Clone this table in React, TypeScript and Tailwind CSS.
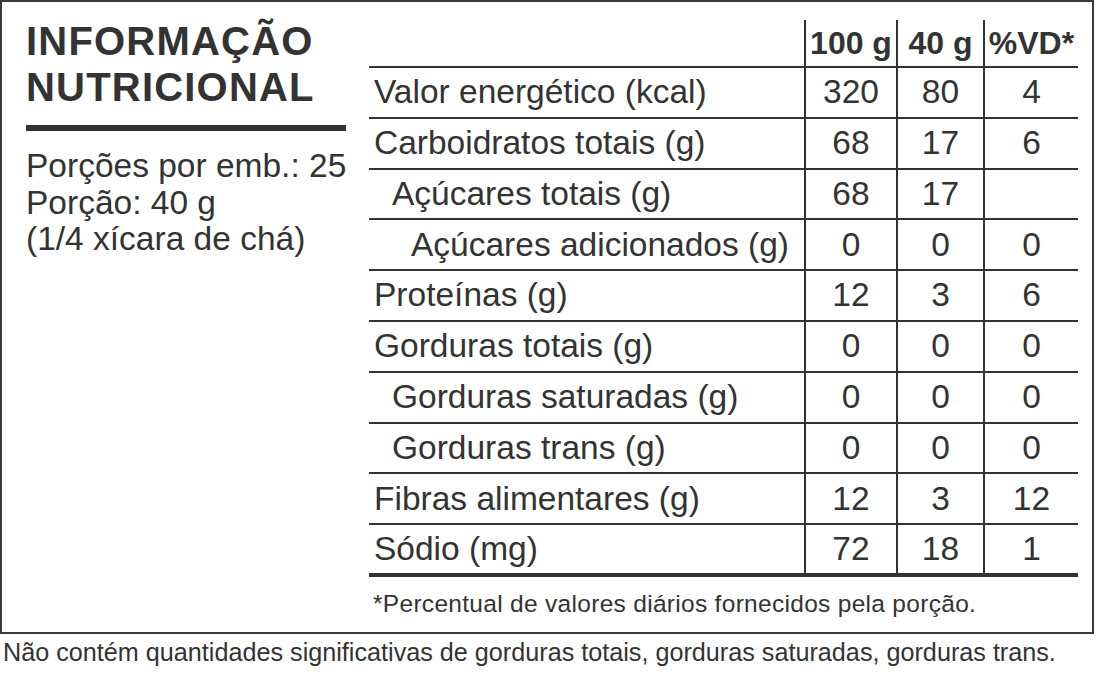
const rows = [
  { label: "Valor energético (kcal)", indent: 0, a: "320", b: "80", c: "4" },
  { label: "Carboidratos totais (g)", indent: 0, a: "68", b: "17", c: "6" },
  { label: "Açúcares totais (g)", indent: 1, a: "68", b: "17", c: "" },
  { label: "Açúcares adicionados (g)", indent: 2, a: "0", b: "0", c: "0" },
  { label: "Proteínas (g)", indent: 0, a: "12", b: "3", c: "6" },
  { label: "Gorduras totais (g)", indent: 0, a: "0", b: "0", c: "0" },
  { label: "Gorduras saturadas (g)", indent: 1, a: "0", b: "0", c: "0" },
  { label: "Gorduras trans (g)", indent: 1, a: "0", b: "0", c: "0" },
  { label: "Fibras alimentares (g)", indent: 0, a: "12", b: "3", c: "12" },
  { label: "Sódio (mg)", indent: 0, a: "72", b: "18", c: "1" },
];

const indentClass = ["pl-[5px]", "pl-[23px]", "pl-[42px]"];

export default function App() {
  return (
    <div className="w-[1097px] h-[682px] bg-white text-[#333] font-['Liberation_Sans',Arial,sans-serif]">
      <div className="w-[1094px] h-[634px] border-2 border-[#3a3a3a] flex">
        <div className="w-[367px] shrink-0 pl-[24px] pt-[16px]">
          <h1 className="text-[40px] leading-[46px] font-bold tracking-[1.2px]">
            INFORMAÇÃO
            <br />
            NUTRICIONAL
          </h1>
          <div className="mt-[15px] h-[6px] w-[320px] bg-[#333]" />
          <div className="mt-[17px] text-[33.5px] leading-[36.5px]">
            <p>Porções por emb.: 25</p>
            <p>Porção: 40 g</p>
            <p>(1/4 xícara de chá)</p>
          </div>
        </div>
        <div className="flex-1 pt-[18px]">
          <div className="w-[709px]">
            <div className="h-[48px] flex border-b-2 border-[#333] text-[32px] font-bold">
              <div className="w-[435px]" />
              <div className="w-[92px] border-l-2 border-[#333] flex items-center justify-center">100 g</div>
              <div className="w-[87px] border-l-2 border-[#333] flex items-center justify-center">40 g</div>
              <div className="w-[95px] border-l-2 border-[#333] flex items-center justify-center">%VD*</div>
            </div>
            {rows.map((r, i) => (
              <div
                key={r.label}
                className={`flex text-[33.5px] border-[#333] ${
                  i === rows.length - 1 ? "h-[51.8px] border-b-4" : "h-[50.8px] border-b-2"
                }`}
              >
                <div className={`w-[435px] flex items-center ${indentClass[r.indent]}`}>{r.label}</div>
                <div className="w-[92px] border-l-2 border-[#333] flex items-center justify-center">{r.a}</div>
                <div className="w-[87px] border-l-2 border-[#333] flex items-center justify-center">{r.b}</div>
                <div className="w-[95px] border-l-2 border-[#333] flex items-center justify-center">{r.c}</div>
              </div>
            ))}
          </div>
          <p className="mt-[12px] pl-[4px] text-[24.5px] leading-[30px] tracking-[0.3px]">
            *Percentual de valores diários fornecidos pela porção.
          </p>
        </div>
      </div>
      <p className="mt-[3px] pl-[3px] text-[25.2px] leading-[30px]">
        Não contém quantidades significativas de gorduras totais, gorduras saturadas, gorduras trans.
      </p>
    </div>
  );
}
